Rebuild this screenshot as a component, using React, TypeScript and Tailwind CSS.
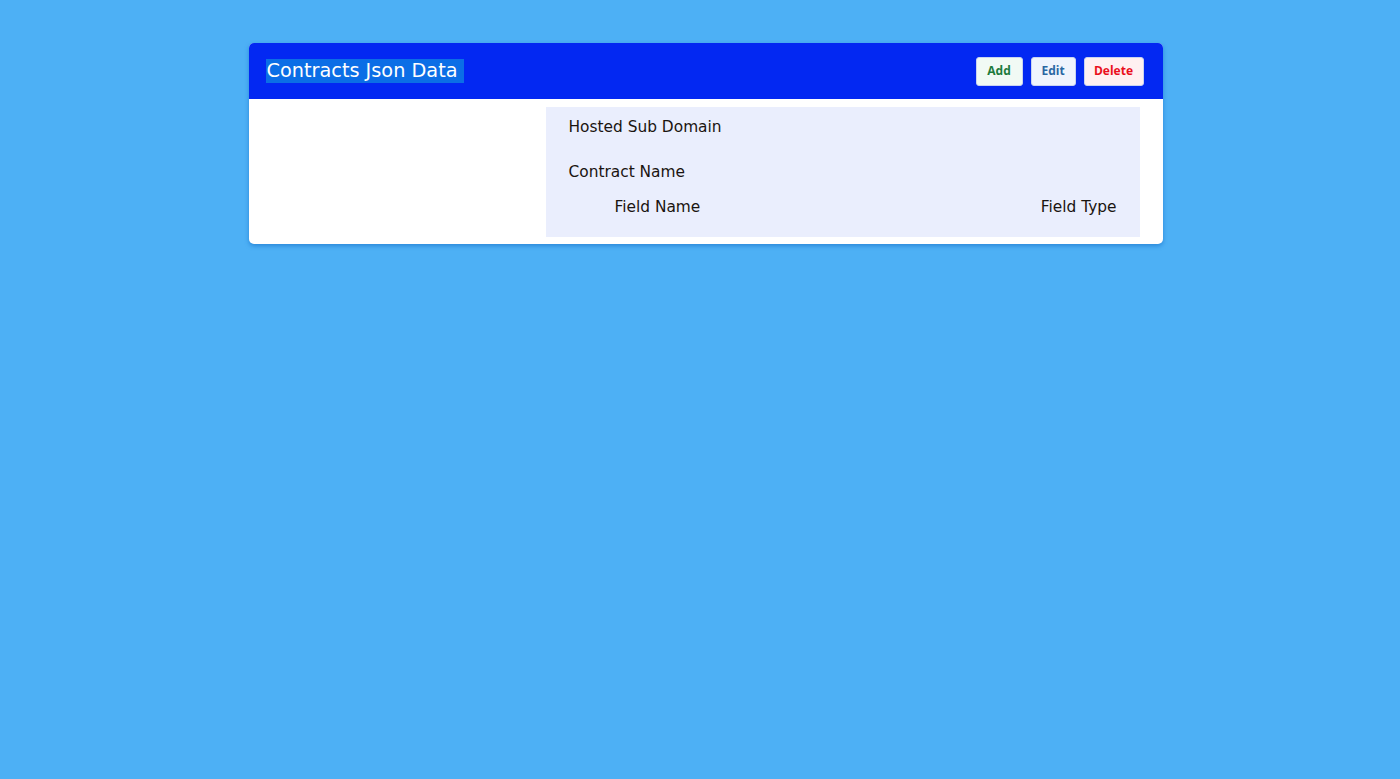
import React from "react";

const fields = ["Hosted Sub Domain", "Contract Name"];

function ActionButton({ label, className }: { label: string; className: string }) {
  return (
    <button
      type="button"
      className={`h-[29px] rounded-[3px] border border-[#c9d3f0] text-[12px] font-bold ${className}`}
      style={{ fontFamily: "'Open Sans', 'Liberation Sans', sans-serif" }}
    >
      {label}
    </button>
  );
}

export default function App() {
  return (
    <div
      className="min-h-[779px] w-full bg-[#4db0f5] pt-[43px] pl-[11px]"
      style={{ fontFamily: "'DejaVu Sans', 'Noto Sans', sans-serif" }}
    >
      <div className="mx-auto w-[914px] overflow-hidden rounded-[5px] bg-white shadow-[0_2px_4px_rgba(20,110,200,0.6)]">
        <div className="flex h-[56px] items-center justify-between bg-[#0328f2] pl-[17px] pr-[19px]">
          <h1 className="bg-[#0b6ee6] py-[1px] pl-[1px] pr-[6px] text-[19.3px] leading-[22px] font-medium text-white">
            Contracts Json Data
          </h1>
          <div className="flex gap-[8px]">
            <ActionButton label="Add" className="w-[47px] bg-[#f1faf4] text-[#1d7a3c]" />
            <ActionButton label="Edit" className="w-[45px] bg-[#eff4fd] text-[#2a67a3]" />
            <ActionButton label="Delete" className="w-[60px] bg-[#fff0f1] text-[#ea0f1c]" />
          </div>
        </div>

        <div className="flex pt-[8px] pr-[23px] pb-[7px] pl-[297px]">
          <div className="flex-1 bg-[#eaeefd] px-[23px] pt-[9px] pb-[19px] text-[15.4px] text-[#1a1410]">
            <p className="leading-[22px]">{fields[0]}</p>
            <p className="mt-[23px] leading-[22px]">{fields[1]}</p>
            <div className="mt-[13px] flex justify-between pl-[46px] leading-[22px]">
              <span>Field Name</span>
              <span>Field Type</span>
            </div>
          </div>
        </div>
      </div>
    </div>
  );
}
